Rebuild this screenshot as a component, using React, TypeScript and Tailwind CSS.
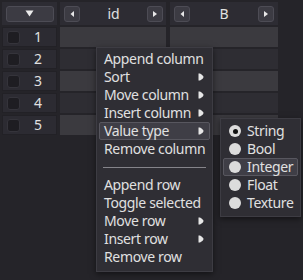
import React from 'react';

const rows = [1, 2, 3, 4, 5];

const menuItems: ({ label: string; sub?: boolean; active?: boolean } | 'sep')[] = [
  { label: 'Append column' },
  { label: 'Sort', sub: true },
  { label: 'Move column', sub: true },
  { label: 'Insert column', sub: true },
  { label: 'Value type', sub: true, active: true },
  { label: 'Remove column' },
  'sep',
  { label: 'Append row' },
  { label: 'Toggle selected' },
  { label: 'Move row', sub: true },
  { label: 'Insert row', sub: true },
  { label: 'Remove row' },
];

const types = ['String', 'Bool', 'Integer', 'Float', 'Texture'];

function Arrow({ dir }: { dir: 'left' | 'right' }) {
  return (
    <svg width="6" height="8" viewBox="0 0 6 8">
      {dir === 'left' ? (
        <path d="M5 1 L1.5 4 L5 7 Z" fill="#e8e8e8" />
      ) : (
        <path d="M1 1 L5 4 L1 7 Z" fill="#e8e8e8" />
      )}
    </svg>
  );
}

function SmallButton({ dir }: { dir: 'left' | 'right' }) {
  return (
    <div className="w-[16px] h-[16px] rounded-[3px] bg-[#3c3b43] border border-[#4d4c55] flex items-center justify-center">
      <Arrow dir={dir} />
    </div>
  );
}

function MenuArrow() {
  return (
    <svg width="6" height="8" viewBox="0 0 6 8" className="shrink-0">
      <path d="M0.5 0.5 L2 0.5 Q5.5 2.5 5.5 4 Q5.5 5.5 2 7.5 L0.5 7.5 Z" fill="#e6e6e6" />
    </svg>
  );
}

export default function App() {
  return (
    <div
      className="relative w-[303px] h-[280px] bg-[#252429] overflow-hidden pt-[2px] pl-[2px] text-[#e0e0e0]"
      style={{ fontFamily: '"Noto Sans", sans-serif' }}
    >
      {/* Header */}
      <div className="flex h-[23px]">
        <div className="w-[55px] bg-[#2d2c33] flex items-center justify-center">
          <div className="w-[48px] h-[16px] rounded-[3px] bg-[#3c3b43] border border-[#4d4c55] flex items-center justify-center">
            <svg width="9" height="7" viewBox="0 0 9 7">
              <path d="M0.5 0.5 L8.5 0.5 L4.5 6.5 Z" fill="#ececec" />
            </svg>
          </div>
        </div>
        <div className="ml-[3px] w-[106px] bg-[#2d2c33] flex items-center pl-[4px] pr-[3px]">
          <SmallButton dir="left" />
          <div className="flex-1 text-center text-[14px] leading-none">id</div>
          <SmallButton dir="right" />
        </div>
        <div className="ml-[4px] w-[108px] bg-[#2d2c33] flex items-center px-[4px]">
          <SmallButton dir="left" />
          <div className="flex-1 text-center text-[14px] leading-none">B</div>
          <SmallButton dir="right" />
        </div>
      </div>

      {/* Rows */}
      <div className="flex flex-col gap-[2px] mt-[2px]">
        {rows.map((n) => {
          const light = n % 2 === 1;
          return (
            <div key={n} className="flex h-[20px]">
              <div className="w-[55px] bg-[#2c2b32] border border-[#222126] flex items-center pl-[4px]">
                <div className="w-[13px] h-[13px] rounded-[3px] bg-[#1e1d22] border border-[#35343b]" />
                <div className="flex-1 text-center text-[14px] leading-none">{n}</div>
              </div>
              <div className={`ml-[3px] w-[106px] ${light ? 'bg-[#3b3a3f]' : 'bg-[#2e2d33]'}`} />
              <div className={`ml-[4px] w-[108px] ${light ? 'bg-[#3b3a3f]' : 'bg-[#2e2d33]'}`} />
            </div>
          );
        })}
      </div>

      {/* Context menu */}
      <div className="absolute left-[96px] top-[47px] w-[117px] h-[225px] bg-[#2f2e34] border border-[#3d3c43] shadow-[0_2px_6px_rgba(0,0,0,0.5)] pt-[2px]">
        {menuItems.map((item, i) =>
          item === 'sep' ? (
            <div key={i} className="h-[18px] flex items-center px-[6px]">
              <div className="w-full h-px bg-[#85848a]" />
            </div>
          ) : (
            <div key={i} className="h-[18px] px-[2px]">
              <div
                className={`h-full flex items-center justify-between pl-[4px] pr-[5px] text-[14px] tracking-[-0.35px] leading-none whitespace-nowrap rounded-[2px] border ${
                  item.active ? 'bg-[#3f3e46] border-[#58575f]' : 'border-transparent'
                }`}
              >
                <span>{item.label}</span>
                {item.sub && <MenuArrow />}
              </div>
            </div>
          )
        )}
      </div>

      {/* Submenu */}
      <div className="absolute left-[220px] top-[118px] w-[81px] h-[99px] bg-[#2f2e34] border border-[#3d3c43] shadow-[0_2px_6px_rgba(0,0,0,0.5)] pt-[3px]">
        {types.map((t, i) => (
          <div key={t} className="h-[18px] px-[2px]">
            <div
              className={`h-full flex items-center gap-[6px] pl-[5px] text-[14px] tracking-[-0.35px] leading-none whitespace-nowrap rounded-[2px] border ${
                i === 2 ? 'bg-[#3f3e46] border-[#58575f]' : 'border-transparent'
              }`}
            >
              <div className="w-[12px] h-[12px] shrink-0 rounded-full bg-[#dcdcdc] flex items-center justify-center">
                {i === 0 && <div className="w-[5px] h-[5px] rounded-full bg-[#111]" />}
              </div>
              <span>{t}</span>
            </div>
          </div>
        ))}
      </div>
    </div>
  );
}
